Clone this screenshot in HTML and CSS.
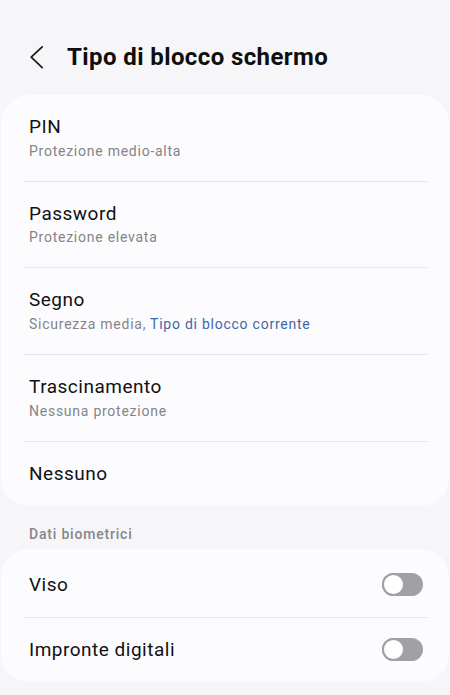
FILE: index.html
```html
<!DOCTYPE html>
<html lang="it">
<head>
<meta charset="utf-8">
<title>Tipo di blocco schermo</title>
<link rel="stylesheet" href="styles.css">
</head>
<body>
<header class="appbar">
  <svg class="back" width="14" height="24" viewBox="0 0 14 24" aria-label="Indietro">
    <polyline points="12.2,1.8 1.2,12.2 12.2,22.7" fill="none" stroke="#1a1a1a" stroke-width="1.7" stroke-linecap="round" stroke-linejoin="round"/>
  </svg>
  <h1 class="title">Tipo di blocco schermo</h1>
</header>

<section class="card">
  <div class="row">
    <div class="row-title">PIN</div>
    <div class="row-sub">Protezione medio-alta</div>
  </div>
  <div class="divider"></div>
  <div class="row">
    <div class="row-title">Password</div>
    <div class="row-sub">Protezione elevata</div>
  </div>
  <div class="divider"></div>
  <div class="row">
    <div class="row-title">Segno</div>
    <div class="row-sub">Sicurezza media, <span class="current">Tipo di blocco corrente</span></div>
  </div>
  <div class="divider"></div>
  <div class="row">
    <div class="row-title">Trascinamento</div>
    <div class="row-sub">Nessuna protezione</div>
  </div>
  <div class="divider"></div>
  <div class="row">
    <div class="row-title">Nessuno</div>
  </div>
</section>

<div class="section-label">Dati biometrici</div>

<section class="card card-bio">
  <div class="row row-switch">
    <div class="row-title">Viso</div>
    <span class="toggle"><span class="thumb"></span></span>
  </div>
  <div class="divider"></div>
  <div class="row row-switch">
    <div class="row-title">Impronte digitali</div>
    <span class="toggle"><span class="thumb"></span></span>
  </div>
</section>
</body>
</html>
```
FILE: styles.css
```css
* { box-sizing: border-box; }

html, body {
  margin: 0;
  padding: 0;
  background: #f6f6f8;
}

body {
  font-family: Roboto, "Noto Sans", "Liberation Sans", sans-serif;
  color: #111111;
  width: 450px;
  height: 695px;
  overflow: hidden;
}

.appbar {
  display: flex;
  align-items: center;
  padding: 41px 0 22px 30px;
}

.back {
  display: block;
  flex: none;
}

.title {
  margin: 0 0 0 23px;
  font-size: 24px;
  line-height: 32px;
  font-weight: 700;
  color: #0e0e0e;
  letter-spacing: 0.4px;
}

.card {
  margin: 0 1px;
  background: #fcfcfe;
  border-radius: 28px;
}

.row {
  padding: 20px 26px 20px 28px;
}

.row-title {
  font-size: 19px;
  line-height: 24px;
  color: #111111;
  letter-spacing: 0.5px;
}

.row-sub {
  margin-top: 1.67px;
  font-size: 14px;
  line-height: 20px;
  color: #848486;
  letter-spacing: 0.75px;
}

.current {
  color: #3e66a8;
}

.divider {
  height: 1px;
  margin: 0 22px;
  background: #e6e6e8;
}

.section-label {
  padding: 18px 29px 5px;
  font-size: 14px;
  line-height: 20px;
  font-weight: 500;
  color: #86868a;
  letter-spacing: 0.8px;
}

.card-bio {
  padding-top: 4px;
}

.row-switch {
  display: flex;
  align-items: center;
  justify-content: space-between;
}

.toggle {
  position: relative;
  display: block;
  width: 41px;
  height: 23px;
  border-radius: 12px;
  background: #a1a1a5;
}

.thumb {
  position: absolute;
  left: 0;
  top: 0;
  width: 23px;
  height: 23px;
  border-radius: 50%;
  background: #ffffff;
  border: 2.5px solid #a1a1a5;
}
```
